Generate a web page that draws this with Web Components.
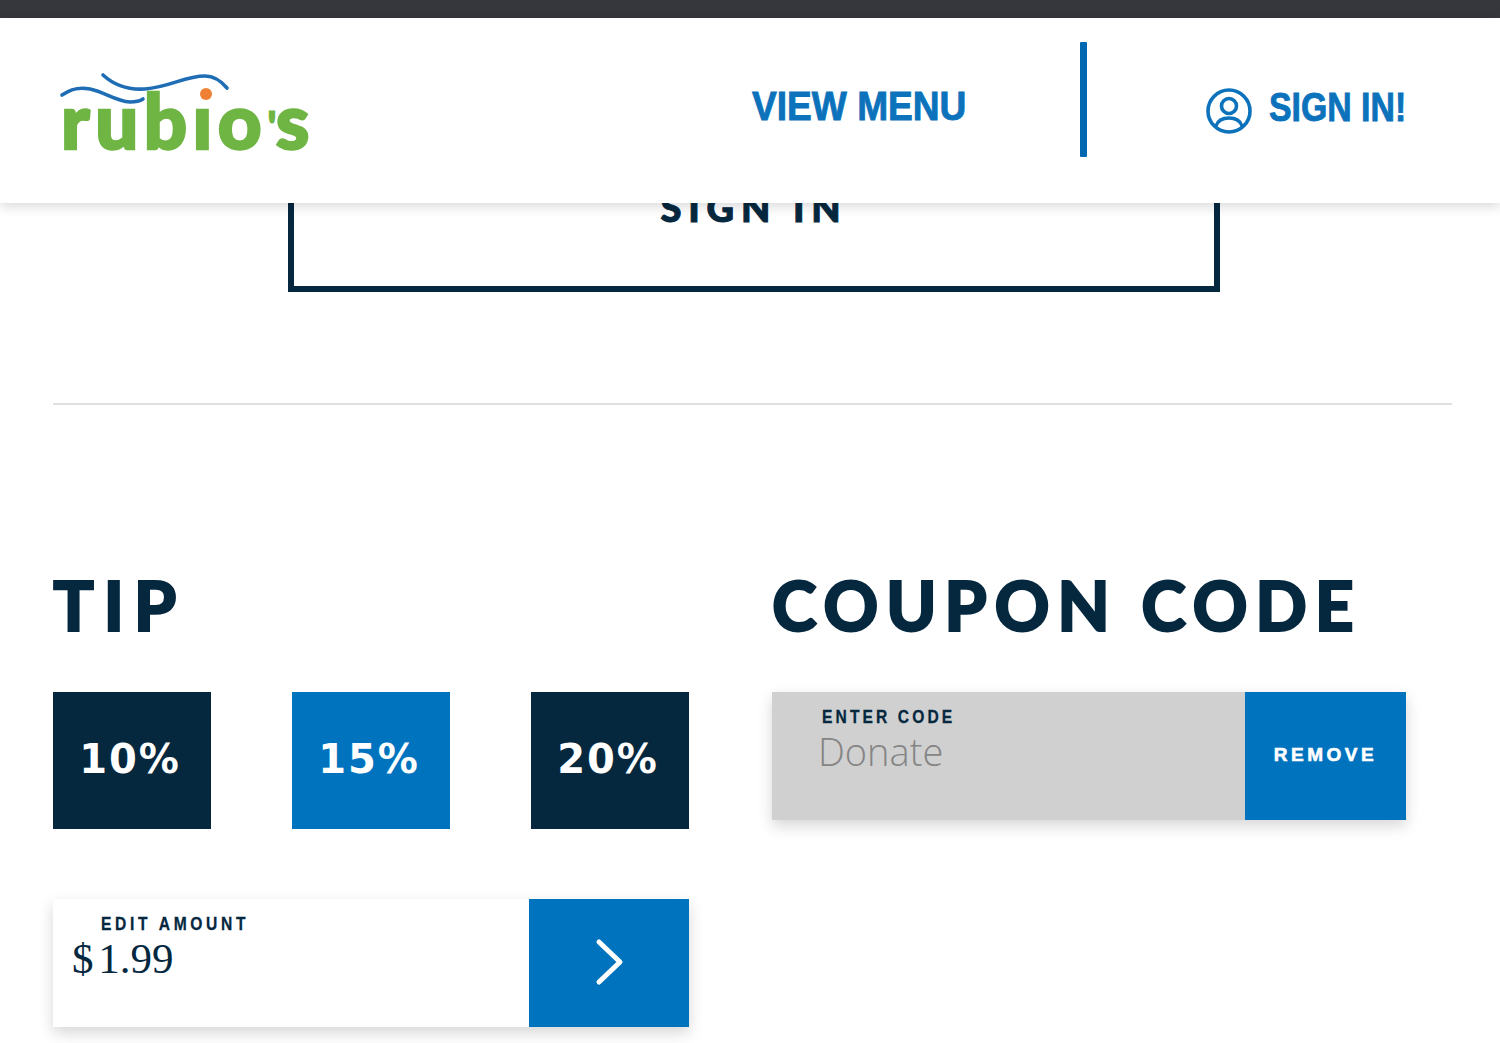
<!doctype html>
<html lang="en"><head><meta charset="utf-8"><title>Rubio's</title>
<style>
html,body{margin:0;background:#fff;overflow:hidden;height:1043px}
body{font-family:"Liberation Sans",Arial,sans-serif}
</style></head><body>
<rb-page></rb-page>
<script>
function def(name,html,init){
  customElements.define(name,class extends HTMLElement{
    constructor(){super();const s=this.attachShadow({mode:'open'});s.innerHTML=html;}
    connectedCallback(){init&&init(this);}
  });
}
def('rb-logo',`<style>
:host{display:block;position:relative;width:252px;height:81px;flex:none}
.t{position:absolute;left:1px;top:8px;font:900 76px/1 Lato,"Open Sans",sans-serif;color:#6fb544;letter-spacing:5.5px;white-space:nowrap;-webkit-text-stroke:2.4px #6fb544}
.a{font-size:44px;letter-spacing:-1px;position:relative;top:-6px;-webkit-text-stroke:1px #6fb544}
svg{position:absolute;left:0;top:0;overflow:visible}
</style><span class="t">rubio<span class="a">'</span>s</span>
<svg width="252" height="81" viewBox="0 0 252 81" aria-hidden="true">
<rect x="134" y="8" width="30" height="25" fill="#fff"/>
<path d="M43 1C55 12 70 16 85 15C110 13 125 2 145 2C155 2 162 8 167 14" fill="none" stroke="#1f6db5" stroke-width="3.6" stroke-linecap="round"/>
<path d="M2 21C12 14 20 13 30 15C45 18 55 27 70 28C76 28 80 27 83 25" fill="none" stroke="#1f6db5" stroke-width="3.6" stroke-linecap="round"/>
<circle cx="146" cy="20" r="6" fill="#f08033"/>
</svg>`);
def('rb-nav-link',`<style>
:host{display:inline-flex;align-items:center;gap:17px;color:#0b72bb;font:700 41px/1 "Liberation Sans",sans-serif;white-space:nowrap;-webkit-text-stroke:.9px currentColor}
.box{display:block;width:var(--w)}
.t{display:inline-block;transform:translateY(var(--dy,0)) scaleX(var(--sx));transform-origin:0 50%;margin-top:var(--up,0)}
</style><slot name="icon"></slot><span class="box"><span class="t"><slot></slot></span></span>`);
def('rb-header',`<style>
:host{display:flex;position:relative;z-index:2;align-items:center;height:185px;box-sizing:border-box;padding:0 95px 0 60px;background:#fff;box-shadow:0 3px 12px rgba(0,0,0,.16)}
.logo{margin-top:8px}
.sp{flex:1}
.bar{width:7px;height:115px;background:#0067b0;border-radius:1px;margin:-22px 119px 0 114px}
</style><rb-logo class="logo"></rb-logo><div class="sp"></div>
<slot name="menu"></slot><div class="bar"></div><slot name="sign"></slot>`);
def('rb-outline-button',`<style>
:host{display:flex;box-sizing:border-box;align-items:center;justify-content:center;width:932px;height:170px;border:6px solid #05283f;color:#05283f;font:900 38px/1 Lato,sans-serif;letter-spacing:6.8px;-webkit-text-stroke:1px #05283f}
</style><slot></slot>`);
def('rb-heading',`<style>
:host{display:block;height:70px;color:#05283f;font:900 68px/70px Lato,sans-serif;letter-spacing:var(--ls,7.6px);white-space:nowrap;-webkit-text-stroke:1.8px #05283f}
</style><slot></slot>`);
def('rb-tip',`<style>
:host{display:flex;align-items:center;justify-content:center;width:158px;height:137px;background:#05283f;color:#fff;font:700 40px/1 "DejaVu Sans",sans-serif;padding:0 4px 3px 0;box-sizing:border-box;letter-spacing:2px}
:host([active]){background:#0073bf}
</style><slot></slot>`);
def('rb-field',`<style>
:host{display:flex;height:128px;background:#fff;box-shadow:0 6px 14px rgba(0,0,0,.16);overflow:hidden}
:host([disabled]){background:#d0d0d0}
.in{flex:1;min-width:0;position:relative}
.lab{display:block;color:#05283f;font:700 19px/1 "Liberation Sans",sans-serif;letter-spacing:var(--lab-ls,4.5px);white-space:nowrap;padding:var(--lab-pad,15px 0 0 48px);-webkit-text-stroke:.3px #05283f}
.lab i{display:inline-block;font-style:normal;transform:scaleX(.82);transform-origin:0 50%}
.val{display:block;white-space:nowrap;padding:var(--val-pad,3px 0 0 0)}
.act{flex:none;width:var(--act,160px);display:flex;align-items:center;justify-content:center;background:#0073bf;color:#fff}
</style><div class="in"><span class="lab"><i><slot name="label"></slot></i></span><span class="val"><slot name="value"></slot></span></div><div class="act"><slot name="action"></slot></div>`);
def('rb-page',`<style>
:host{display:block;font-family:"Liberation Sans",sans-serif}
.top{height:18px;background:#36373c}
main{display:block;padding:0 48px 0 53px}
rb-outline-button{margin:-81px 0 0 235px}
hr{border:0;height:2px;background:#e0e0e0;margin:111px 0 0}
.cols{display:grid;grid-template-columns:636px 634px;column-gap:83px;margin-top:165px}
.tips{display:flex;justify-content:space-between;margin-top:52px}
.left rb-heading{--ls:9.5px}
.left rb-field{margin-top:70px;--lab-pad:15px 0 0 48px;--val-pad:4px 0 0 19px}
.right rb-field{margin-top:52px;--lab-pad:15px 0 0 50px;--val-pad:7px 0 0 46px;--act:161px;--lab-ls:3.8px}
.d{font:300 38px/36px "Open Sans",sans-serif;color:#858585}
.m{font:400 43px/44px "Liberation Serif",serif;color:#05283f;word-spacing:-6px}
.rm{font:900 19px/1 "Liberation Sans",sans-serif;letter-spacing:3.5px;margin-top:-4px;-webkit-text-stroke:.6px #fff}
svg.chev{display:block;margin-top:-2px}
svg.u{display:block}
.mn{--w:214px;--sx:.905;--up:-8px;margin-top:-8px}
.si{--w:136px;--sx:.825;--up:-15px;--dy:-3px}
</style>
<div class="top"></div>
<rb-header>
<rb-nav-link class="mn" slot="menu">VIEW MENU</rb-nav-link>
<rb-nav-link class="si" slot="sign"><svg class="u" slot="icon" width="46" height="46" viewBox="0 0 46 46" fill="none" stroke="#0b72bb" stroke-width="3.6" aria-hidden="true"><circle cx="23" cy="23" r="21"/><circle cx="23" cy="18" r="7.5"/><path d="M10 38C12 32 17 30 23 30C29 30 34 32 36 38"/></svg>SIGN IN!</rb-nav-link>
</rb-header>
<main>
<rb-outline-button>SIGN IN</rb-outline-button>
<hr>
<div class="cols">
<section class="left">
<rb-heading>TIP</rb-heading>
<div class="tips"><rb-tip>10%</rb-tip><rb-tip active>15%</rb-tip><rb-tip>20%</rb-tip></div>
<rb-field><span slot="label">EDIT AMOUNT</span><span slot="value" class="m">$ 1.99</span>
<svg class="chev" slot="action" width="30" height="48" viewBox="0 0 30 48" fill="none" stroke="#fff" stroke-width="5" stroke-linecap="round" stroke-linejoin="round" aria-hidden="true"><path d="M5 4L26 24L5 44"/></svg></rb-field>
</section>
<section class="right">
<rb-heading>COUPON CODE</rb-heading>
<rb-field disabled><span slot="label">ENTER CODE</span><span slot="value" class="d">Donate</span><span slot="action" class="rm">REMOVE</span></rb-field>
</section>
</div>
</main>`);
</script></body></html>
